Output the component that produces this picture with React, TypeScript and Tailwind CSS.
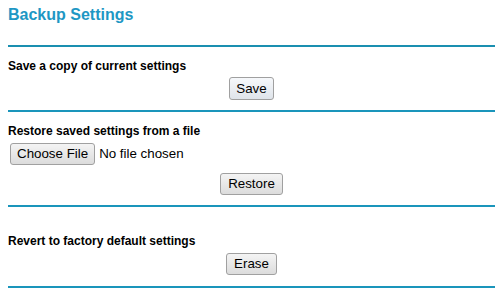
import React from "react";

const btn =
  "h-[22px] px-[6px] text-[13.33px] leading-none text-black rounded-[3px] border border-[#a0a0a0] bg-gradient-to-b from-[#f4f4f4] to-[#dcdcdc] font-['Liberation_Sans',Arial,sans-serif]";

export default function App() {
  return (
    <div className="w-[502px] h-[308px] bg-white font-['Liberation_Sans',Arial,sans-serif] text-black">
      <div className="pl-[8px] w-[495px]">
        <div className="h-[45px] pt-[7px]">
          <div className="text-[16px] leading-[16px] font-bold text-[#1e97c4]">Backup Settings</div>
        </div>
        <div className="h-[2px] bg-[#1a8fb0]" />

        <div className="mt-[13px] text-[12px] leading-[12px] font-bold">Save a copy of current settings</div>
        <div className="mt-[5px] flex justify-center">
          <button className={btn + " h-[23px] border-[#7ea6d4] from-[#f6f8fb] to-[#dfe4ea]"}>Save</button>
        </div>
        <div className="mt-[10px] h-[2px] bg-[#1a95bb]" />

        <div className="mt-[13px] text-[12px] leading-[12px] font-bold">Restore saved settings from a file</div>
        <div className="mt-[6px] flex items-center pl-[2px]">
          <button className={btn + " h-[21px] px-[5px]"}>Choose File</button>
          <span className="ml-[4px] text-[13.33px] leading-none">No file chosen</span>
        </div>
        <div className="mt-[8px] flex justify-center">
          <button className={btn + " px-[7px]"}>Restore</button>
        </div>
        <div className="mt-[10px] h-[2px] bg-[#1a95bb]" />

        <div className="mt-[28px] text-[12px] leading-[12px] font-bold">Revert to factory default settings</div>
        <div className="mt-[6px] flex justify-center">
          <button className={btn + " h-[21px] px-[7px]"}>Erase</button>
        </div>
        <div className="mt-[11px] h-[2px] bg-[#1a95bb]" />
      </div>
    </div>
  );
}
